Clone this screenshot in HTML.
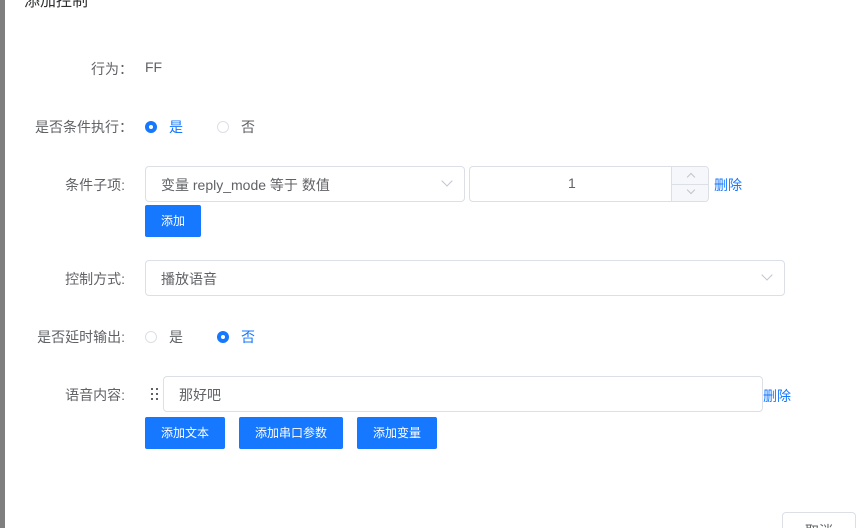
<html style="overflow:hidden"><head><style>
html,body{margin:0;width:862px;height:528px;overflow:hidden}
body{background:#fff;font-family:"Liberation Sans","Noto Sans CJK SC",sans-serif;font-size:14px;color:#606266;position:relative}
.a{position:absolute}
.lbl{position:absolute;right:737px;white-space:nowrap}
.inp{position:absolute;border:1px solid #dcdfe6;border-radius:4px;box-sizing:border-box;background:#fff}
.btn{position:absolute;background:#1677ff;color:#fff;border-radius:2px;font-size:12px;height:32px;line-height:32px;text-align:center}
.r{position:absolute;width:12px;height:12px;border-radius:50%;box-sizing:border-box}
.on{background:#1677ff;border:1px solid #1677ff}
.on:after{content:"";position:absolute;left:3px;top:3px;width:4px;height:4px;border-radius:50%;background:#fff}
.off{border:1px solid #dcdfe6}
.chev{position:absolute;width:7px;height:7px;border-right:1px solid #c0c4cc;border-bottom:1px solid #c0c4cc;transform:rotate(45deg)}
.dot{position:absolute;width:2px;height:2px;background:#606266}
</style></head><body>
<div class="a" style="left:0;top:0;width:5px;height:528px;background:#7f7f7f"></div>
<div class="a" style="left:24px;top:-13px;font-size:16px;color:#303133">添加控制</div>

<div class="lbl" style="top:59px;right:729px">行为：</div>
<div class="a" style="left:145px;top:59px">FF</div>

<div class="lbl" style="top:117px;right:729px">是否条件执行：</div>
<div class="r on" style="left:145px;top:121px"></div><div class="a" style="left:169px;top:117px;color:#1677ff">是</div>
<div class="r off" style="left:217px;top:121px"></div><div class="a" style="left:241px;top:117px">否</div>

<div class="lbl" style="top:175px">条件子项:</div>
<div class="inp" style="left:145px;top:166px;width:320px;height:36px"><div class="a" style="left:15px;top:8px">变量 reply_mode 等于 数值</div><div class="chev" style="left:297px;top:10px"></div></div>
<div class="inp" style="left:469px;top:166px;width:240px;height:36px;overflow:hidden"><div class="a" style="left:98px;top:8px">1</div>
<div class="a" style="left:201px;top:0;width:38px;height:34px;background:#f5f7fa;border-left:1px solid #dcdfe6"><div class="a" style="left:0;top:17px;width:38px;height:1px;background:#dcdfe6"></div><div class="chev" style="left:16px;top:7px;width:5px;height:5px;transform:rotate(-135deg)"></div><div class="chev" style="left:16px;top:20px;width:5px;height:5px"></div></div></div>
<div class="a" style="left:714px;top:175px;color:#1677ff;font-size:14px">删除</div>
<div class="btn" style="left:145px;top:205px;width:56px">添加</div>

<div class="lbl" style="top:269px">控制方式:</div>
<div class="inp" style="left:145px;top:260px;width:640px;height:36px"><div class="a" style="left:15px;top:8px">播放语音</div><div class="chev" style="left:617px;top:10px"></div></div>

<div class="lbl" style="top:327px">是否延时输出:</div>
<div class="r off" style="left:145px;top:331px"></div><div class="a" style="left:169px;top:327px">是</div>
<div class="r on" style="left:217px;top:331px"></div><div class="a" style="left:241px;top:327px;color:#1677ff">否</div>

<div class="lbl" style="top:385px">语音内容:</div>
<div class="dot" style="left:151px;top:388px"></div><div class="dot" style="left:156px;top:388px"></div>
<div class="dot" style="left:151px;top:393px"></div><div class="dot" style="left:156px;top:393px"></div>
<div class="dot" style="left:151px;top:398px"></div><div class="dot" style="left:156px;top:398px"></div>
<div class="inp" style="left:163px;top:376px;width:600px;height:36px"><div class="a" style="left:15px;top:8px">那好吧</div></div>
<div class="a" style="left:763px;top:386px;color:#1677ff;font-size:14px">删除</div>
<div class="btn" style="left:145px;top:417px;width:80px">添加文本</div>
<div class="btn" style="left:239px;top:417px;width:104px">添加串口参数</div>
<div class="btn" style="left:357px;top:417px;width:80px">添加变量</div>

<div class="inp" style="left:782px;top:512px;width:74px;height:36px;border-radius:4px"><div class="a" style="left:22px;top:8px;color:#606266">取消</div></div>
</body></html>
